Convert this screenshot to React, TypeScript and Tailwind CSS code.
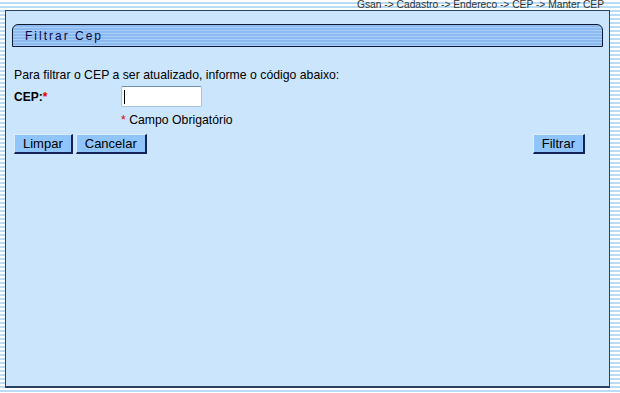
import React from 'react';

const btn =
  'h-[20px] px-[8px] bg-[#8fc5fa] text-[13px] leading-none text-black border border-t-[#dcedff] border-l-[#dcedff] border-b-2 border-r-2 border-b-[#14235a] border-r-[#14235a]';

export default function App() {
  return (
    <div className="h-[393px] w-full overflow-hidden bg-[repeating-linear-gradient(to_bottom,#ffffff_0_2px,#b9dcf4_2px_4px)] font-['Liberation_Sans',Arial,sans-serif]">
      {/* breadcrumb */}
      <div className="h-[10px] pr-[16px] text-right text-[10.25px] leading-[10px] text-[#333]">
        Gsan -&gt; Cadastro -&gt; Endereco -&gt; CEP -&gt; Manter CEP
      </div>

      {/* panel */}
      <div className="ml-[5px] w-[605px] h-[378px] bg-[#cbe5fd] border border-[#2c4060] border-b-2 px-[6px] pt-[13px]">
        <div className="h-[23px] rounded-t-[6px] border border-[#0e1a33] bg-[repeating-linear-gradient(to_bottom,#8cbaf0_0_2px,#a8cff7_2px_3px)] flex items-center pl-[12px]">
          <span className="text-[12px] tracking-[2px] text-[#0a0a40]">Filtrar Cep</span>
        </div>

        <div className="pl-[2px] pr-[18px]">
          <p className="mt-[21px] text-[12.25px] leading-[14px] text-black">
            Para filtrar o CEP a ser atualizado, informe o código abaixo:
          </p>

          <div className="mt-[4px] flex items-center">
            <label className="w-[107px] text-[12px] font-bold text-black">
              CEP:<span className="text-[#e00000]">*</span>
            </label>
            <div className="relative">
              <input
                type="text"
                className="block w-[81px] h-[21px] rounded-[2px] bg-white border border-[#a8c4dc] border-t-[#6f8fae] outline-none px-[3px] text-[12px]"
              />
              <span className="absolute left-[3px] top-[4px] h-[14px] w-px bg-black" />
            </div>
          </div>

          <p className="mt-[6px] pl-[107px] text-[12.25px] leading-[14px] text-black">
            <span className="text-[#e00000]">*</span> Campo Obrigatório
          </p>

          <div className="mt-[7px] flex items-center justify-between">
            <div className="flex gap-[3px]">
              <button className={btn}>Limpar</button>
              <button className={btn}>Cancelar</button>
            </div>
            <button className={btn}>Filtrar</button>
          </div>
        </div>
      </div>
    </div>
  );
}
